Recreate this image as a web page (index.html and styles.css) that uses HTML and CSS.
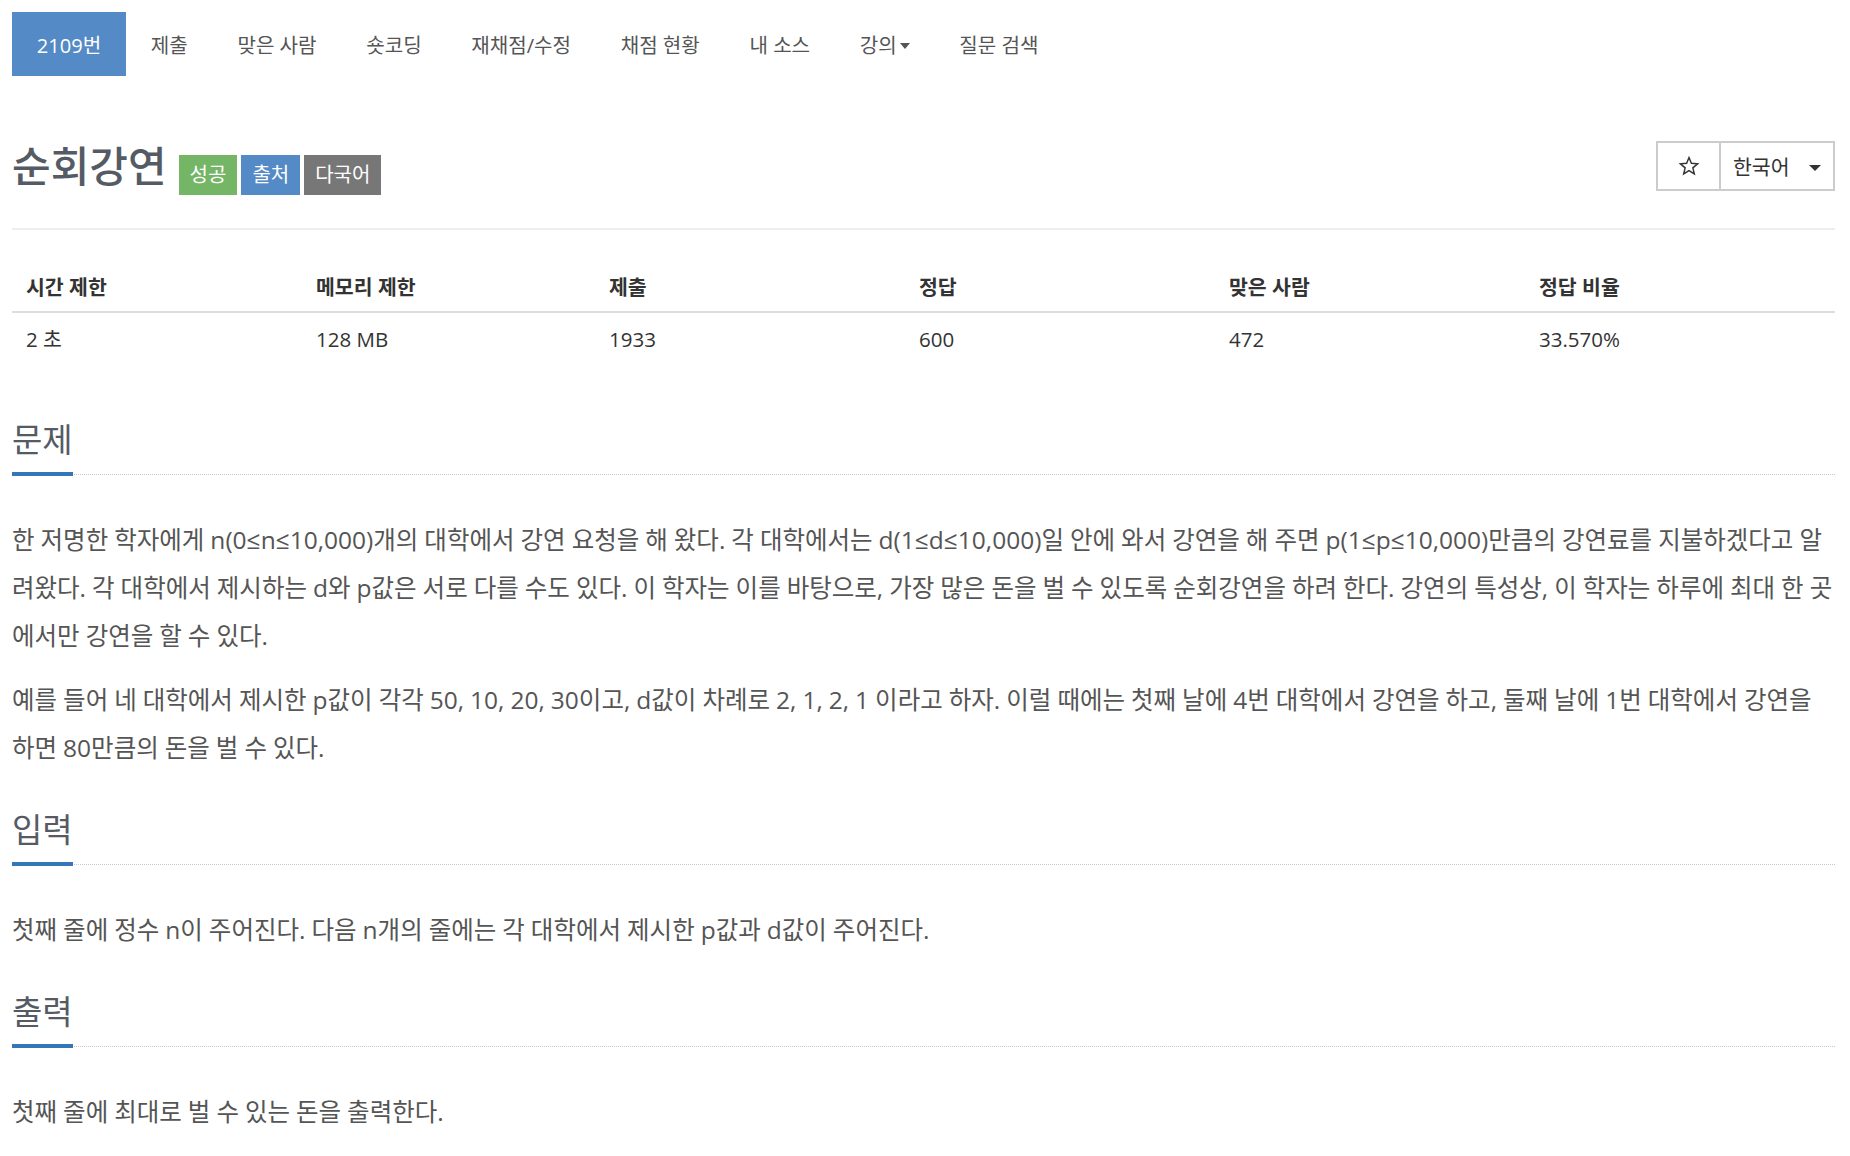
FILE: index.html
```html
<!DOCTYPE html>
<html lang="ko">
<head>
<meta charset="utf-8">
<title>2109번: 순회강연</title>
<link rel="stylesheet" href="styles.css">
</head>
<body>
<div class="page">
  <nav class="tabs">
    <a class="tab active">2109번</a>
    <a class="tab">제출</a>
    <a class="tab">맞은 사람</a>
    <a class="tab">숏코딩</a>
    <a class="tab">재채점/수정</a>
    <a class="tab">채점 현황</a>
    <a class="tab">내 소스</a>
    <a class="tab">강의<span class="mini-caret"></span></a>
    <a class="tab">질문 검색</a>
  </nav>

  <div class="title-row">
    <div class="title-left">
      <h1 class="title">순회강연</h1>
      <span class="badge green">성공</span>
      <span class="badge blue">출처</span>
      <span class="badge gray">다국어</span>
    </div>
    <div class="btn-group">
      <button class="btn star-btn"><svg width="22" height="22" viewBox="0 0 24 24"><path d="M12 2.8l2.6 6.3 6.8.5-5.2 4.4 1.6 6.6L12 17l-5.8 3.6 1.6-6.6-5.2-4.4 6.8-.5z" fill="none" stroke="#333" stroke-width="1.6" stroke-linejoin="miter"/></svg></button>
      <button class="btn lang-btn">한국어 <span class="caret"></span></button>
    </div>
  </div>
  <div class="rule"></div>

  <div class="info-table">
    <div class="th">시간 제한</div>
    <div class="th">메모리 제한</div>
    <div class="th">제출</div>
    <div class="th">정답</div>
    <div class="th">맞은 사람</div>
    <div class="th">정답 비율</div>
    <div class="td">2 초</div>
    <div class="td">128 MB</div>
    <div class="td">1933</div>
    <div class="td">600</div>
    <div class="td">472</div>
    <div class="td">33.570%</div>
  </div>

  <section class="section first">
    <h2 class="headline"><span>문제</span></h2>
    <div class="content">
      <p>한 저명한 학자에게 n(0≤n≤10,000)개의 대학에서 강연 요청을 해 왔다. 각 대학에서는 d(1≤d≤10,000)일 안에 와서 강연을 해 주면 p(1≤p≤10,000)만큼의 강연료를 지불하겠다고 알려왔다. 각 대학에서 제시하는 d와 p값은 서로 다를 수도 있다. 이 학자는 이를 바탕으로, 가장 많은 돈을 벌 수 있도록 순회강연을 하려 한다. 강연의 특성상, 이 학자는 하루에 최대 한 곳에서만 강연을 할 수 있다.</p>
      <p>예를 들어 네 대학에서 제시한 p값이 각각 50, 10, 20, 30이고, d값이 차례로 2, 1, 2, 1 이라고 하자. 이럴 때에는 첫째 날에 4번 대학에서 강연을 하고, 둘째 날에 1번 대학에서 강연을 하면 80만큼의 돈을 벌 수 있다.</p>
    </div>
  </section>

  <section class="section">
    <h2 class="headline"><span>입력</span></h2>
    <div class="content">
      <p>첫째 줄에 정수 n이 주어진다. 다음 n개의 줄에는 각 대학에서 제시한 p값과 d값이 주어진다.</p>
    </div>
  </section>

  <section class="section">
    <h2 class="headline"><span>출력</span></h2>
    <div class="content">
      <p>첫째 줄에 최대로 벌 수 있는 돈을 출력한다.</p>
    </div>
  </section>
</div>
</body>
</html>
```

FILE: styles.css
```css
html, body {
  margin: 0;
  padding: 0;
  background: #fff;
}
body {
  font-family: "Open Sans", "Noto Sans CJK KR", sans-serif;
  color: #555;
}
.page {
  padding: 12px 15px 0 12px;
}

/* nav tabs */
.tabs {
  display: flex;
  height: 64px;
}
.tab {
  display: flex;
  align-items: center;
  padding: 0 24.8px;
  font-size: 20.1px;
  color: #555;
  text-decoration: none;
  white-space: nowrap;
}
.tab.active {
  background: #548ac5;
  color: #fff;
}
.mini-caret {
  display: inline-block;
  width: 0;
  height: 0;
  margin-left: 3px;
  margin-top: 3px;
  border-left: 5px solid transparent;
  border-right: 5px solid transparent;
  border-top: 6px solid #555;
}

/* title */
.title-row {
  display: flex;
  justify-content: space-between;
  align-items: flex-start;
  margin-top: 65px;
}
.title-left {
  display: flex;
  align-items: baseline;
}
.title {
  margin: 0 12px 0 0;
  font-size: 42px;
  font-weight: 500;
  line-height: 50px;
  color: #555b65;
}
.badge {
  display: inline-block;
  height: 40px;
  line-height: 40px;
  padding: 0 11px;
  margin-right: 4px;
  font-size: 20px;
  color: #fff;
}
.badge.green { background: #74b566; }
.badge.blue { background: #548ac5; }
.badge.gray { background: #777; }

.btn-group {
  display: flex;
}
.btn {
  height: 50px;
  background: #fff;
  border: 2px solid #ccc;
  font-family: "Open Sans", "Noto Sans CJK KR", sans-serif;
  font-size: 20.5px;
  color: #333;
  display: flex;
  align-items: center;
  justify-content: center;
  cursor: pointer;
}
.star-btn {
  width: 63px;
  border-right: none;
}
.lang-btn {
  width: 116px;
  padding: 0 12px 0 12px;
  justify-content: space-between;
}
.caret {
  display: inline-block;
  width: 0;
  height: 0;
  border-left: 6px solid transparent;
  border-right: 6px solid transparent;
  border-top: 6px solid #333;
  margin-top: 3px;
}
.rule {
  margin-top: 33px;
  border-top: 2px solid #eee;
}

/* info table */
.info-table {
  display: grid;
  grid-template-columns: 290fr 293fr 310fr 310fr 310fr 310fr;
  margin-top: 34px;
  font-size: 20.5px;
  color: #333;
}
.th {
  padding: 12px 14px;
  line-height: 23px;
  font-weight: 700;
  border-bottom: 2px solid #ddd;
}
.td {
  padding: 15px 14px;
  line-height: 23px;
}

/* sections */
.section {
  margin-top: 38px;
}
.section.first {
  margin-top: 54px;
}
.headline {
  margin: 0;
  padding: 0;
  font-size: 33px;
  font-weight: 400;
  line-height: 40px;
  color: #555b65;
  border-bottom: 1px dotted #c8c8c8;
}
.headline span {
  display: inline-block;
  padding-bottom: 12px;
  border-bottom: 4px solid #3476b8;
  margin-bottom: -2px;
}
.content {
  margin-top: 41px;
}
.content p {
  margin: 0 0 16px 0;
  font-size: 24.5px;
  line-height: 48px;
  word-spacing: -0.35px;
  color: #555;
}
.content p:last-child {
  margin-bottom: 0;
}
```
